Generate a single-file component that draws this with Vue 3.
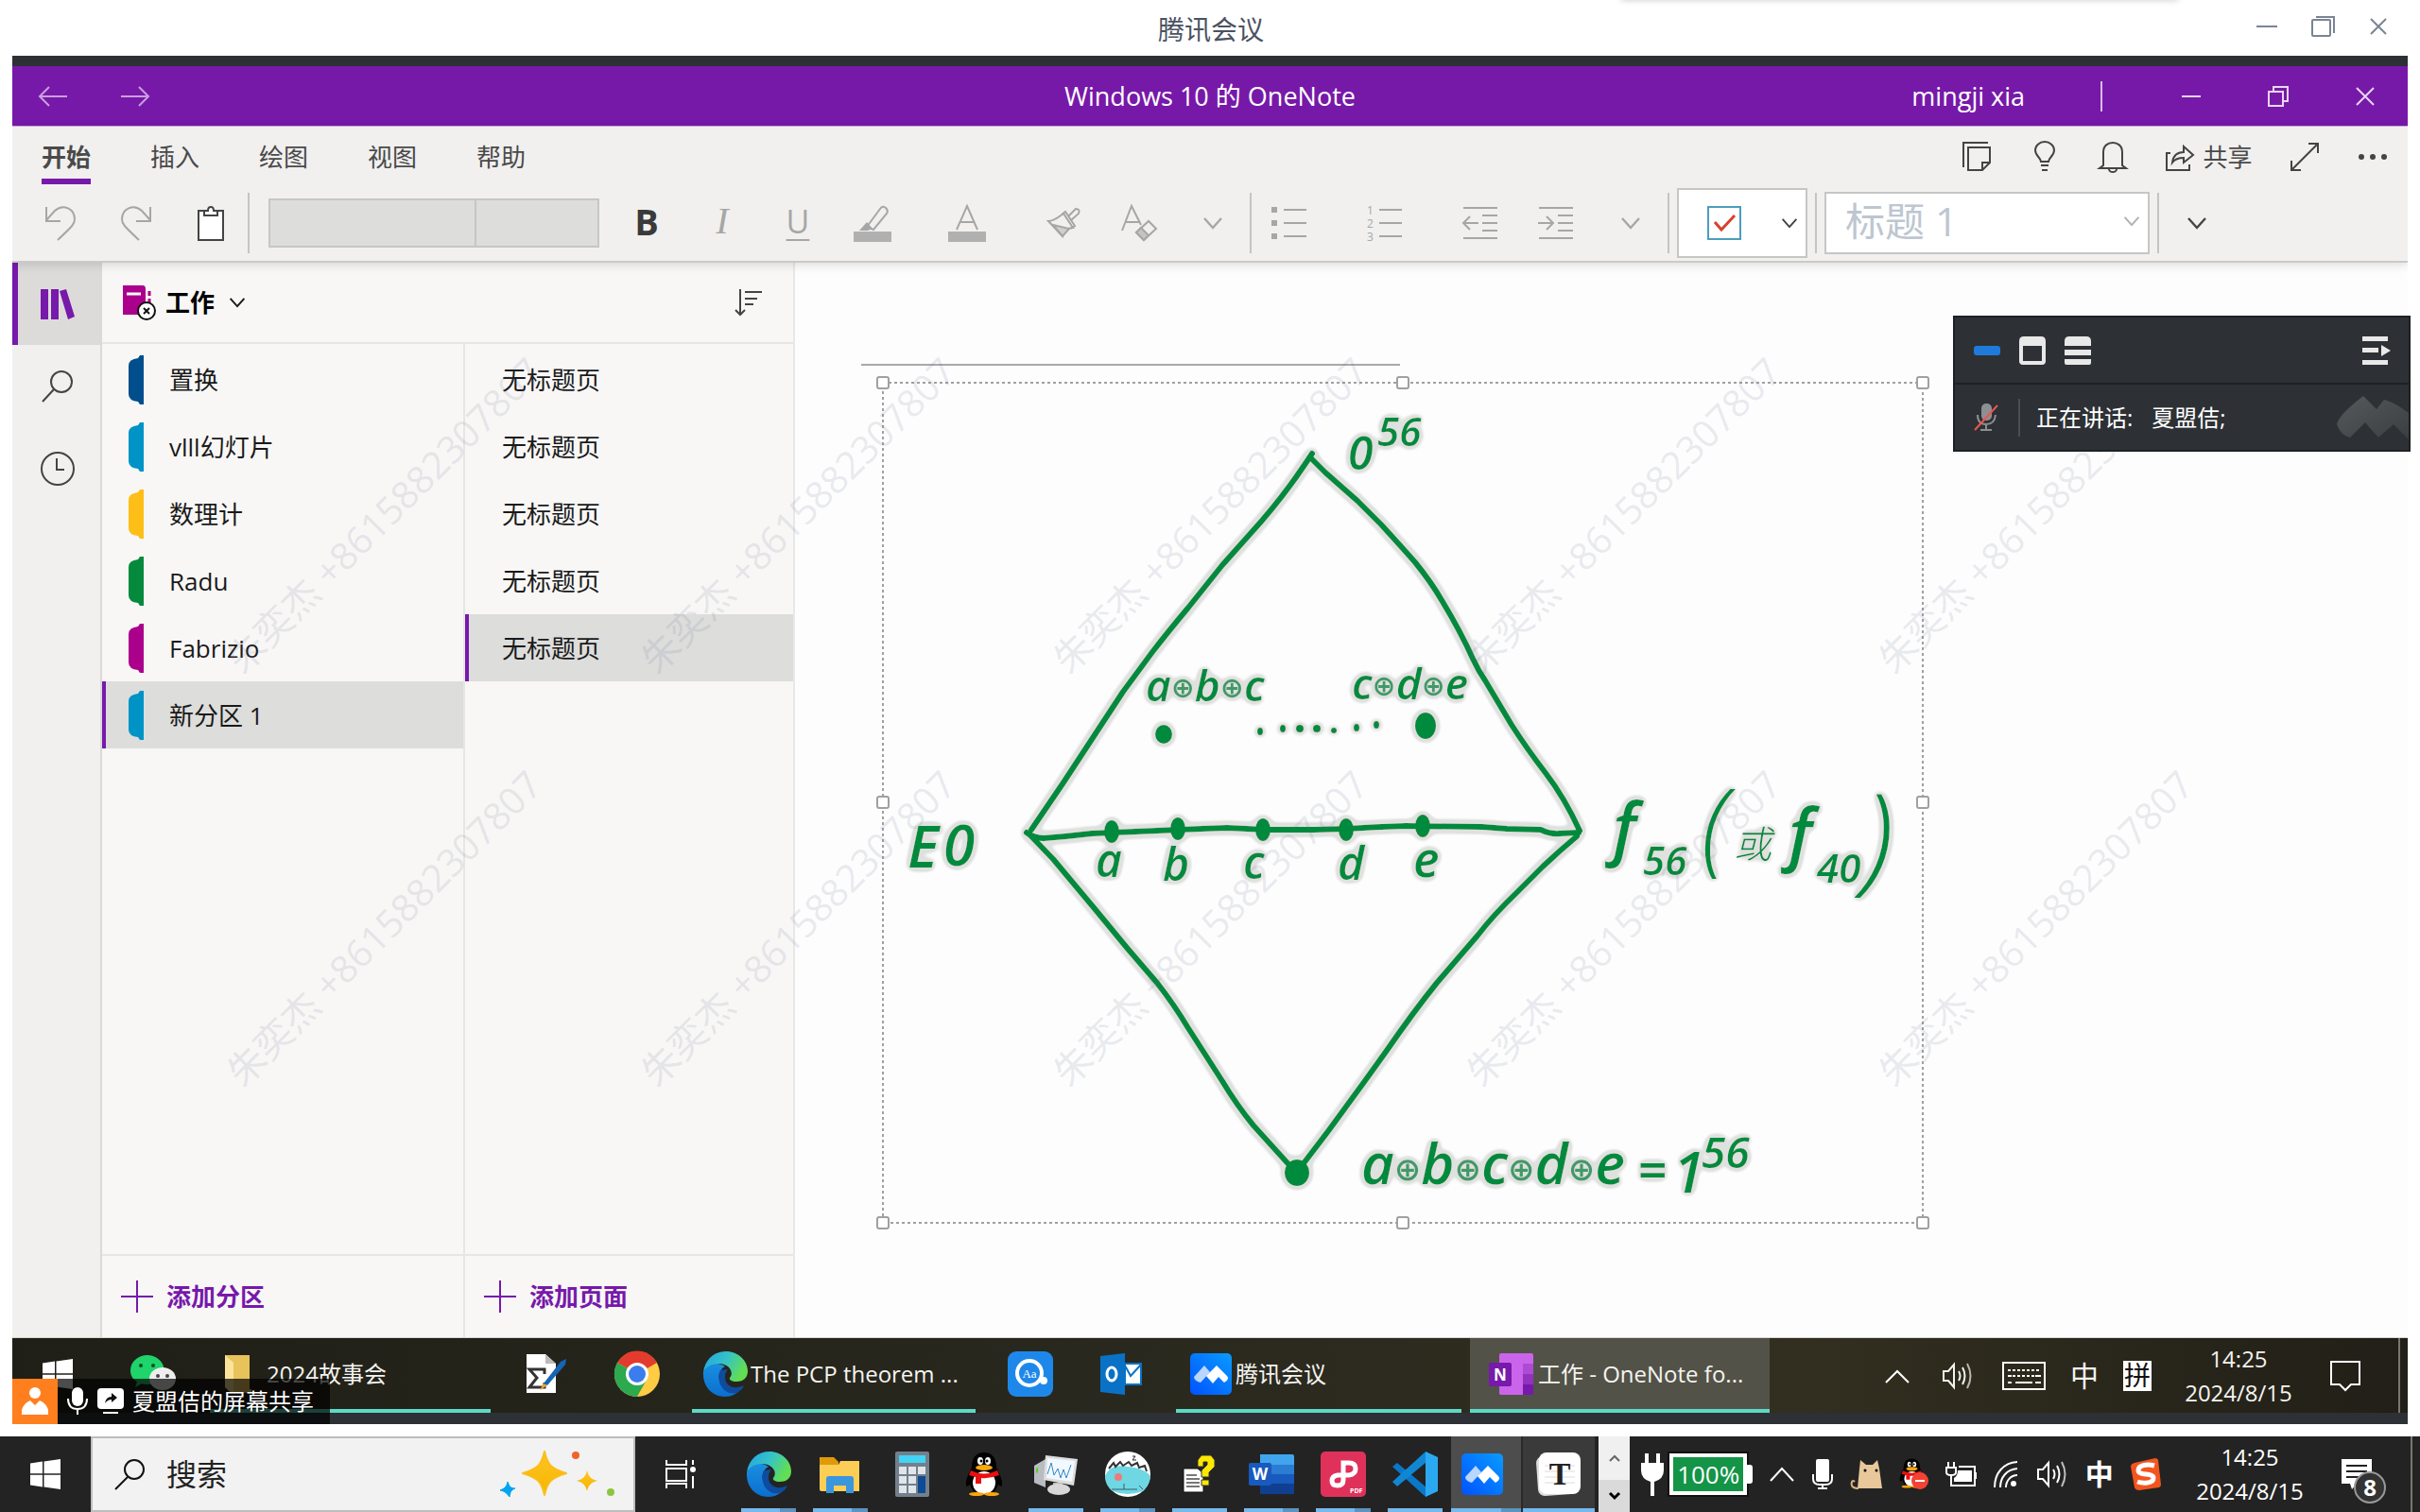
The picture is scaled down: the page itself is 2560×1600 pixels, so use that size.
<script setup>
const tabs = ['开始', '插入', '绘图', '视图', '帮助']
const sections = [
  { name: '置换', color: '#004e8c' },
  { name: 'vlll幻灯片', color: '#0093c6' },
  { name: '数理计', color: '#fdbf17' },
  { name: 'Radu', color: '#058a3d' },
  { name: 'Fabrizio', color: '#ab008b' },
  { name: '新分区 1', color: '#0093c6', active: true },
]
const pages = [1, 2, 3, 4, 5]

const strokes = [
  'M1388 480L1382 489Q1360 522 1334 552L1293 598L1257 643Q1236 668 1219 690L1188 732L1165 767L1125 828L1091 878',
  'M1386 484L1402 500L1436 530L1461 555Q1482 578 1497 595Q1514 616 1525 635Q1545 668 1558 697Q1564 710 1571 720L1599 767Q1615 792 1635 818Q1655 844 1671 879',
  'M1086 881Q1094 887 1104 887Q1130 885 1155 882L1247 878L1298 876L1339 878L1390 878L1425 877Q1455 875 1487 874L1568 875L1594 877L1630 878Q1640 883 1650 882L1670 881',
  'M1090 884L1114 909L1160 964L1193 1004L1224 1040Q1242 1063 1257 1088L1293 1144Q1308 1169 1326 1191L1364 1233',
  'M1668 885Q1650 900 1632 917L1604 945Q1580 968 1563 990L1520 1040Q1495 1071 1466 1113L1443 1145L1405 1197L1376 1235',
]
const dots = [
  [1176, 880, 8, 12], [1246, 877, 8, 12], [1336, 878, 8, 12], [1424, 878, 8, 12], [1505, 874, 8, 12],
  [1231, 777, 9, 10], [1508, 768, 11, 14], [1372, 1241, 13, 14],
  [1333, 774, 3, 4], [1357, 771, 3, 4], [1375, 771, 4, 4], [1393, 771, 4, 4], [1411, 773, 3, 3], [1435, 770, 3, 4], [1456, 767, 3, 4],
]
const labels = [
  ['0', 1426, 497, 48], ['56', 1457, 472, 42],
  ['a', 1159, 928, 48], ['b', 1230, 932, 48], ['c', 1315, 930, 48], ['d', 1415, 931, 48], ['e', 1495, 928, 52],
  ['E', 960, 918, 62], ['0', 998, 916, 60],
  ['f', 1706, 902, 72], ['56', 1738, 926, 42], ['f', 1892, 908, 72], ['40', 1922, 934, 42],
  ['=', 1732, 1258, 54], ['1', 1770, 1262, 60], ['56', 1800, 1236, 46],
]
const sums = [
  { x: 1212, y: 742, size: 46, parts: ['a', 'b', 'c'] },
  { x: 1430, y: 740, size: 46, parts: ['c', 'd', 'e'] },
  { x: 1440, y: 1253, size: 60, parts: ['a', 'b', 'c', 'd', 'e'] },
]
const handles = [[934, 405], [1484, 405], [2034, 405], [934, 849], [2034, 849], [934, 1294], [1484, 1294], [2034, 1294]]
const marks = [545, 982].flatMap((y) => [406, 844, 1280, 1717, 2153].map((x) => ({ x, y })))
</script>

<template>
  <div class="desktop">
    <svg class="defs" aria-hidden="true">
      <defs>
        <linearGradient id="eg1" x1="0" y1="0" x2="1" y2="0.4"><stop offset="0" stop-color="#1fa2e6" /><stop offset=".55" stop-color="#36c4c6" /><stop offset="1" stop-color="#62de52" /></linearGradient>
        <linearGradient id="eg2" x1="0" y1="0" x2="0" y2="1"><stop offset="0" stop-color="#1a8fe0" /><stop offset="1" stop-color="#0b6fd0" /></linearGradient>
        <linearGradient id="tm" x1="0" y1="1" x2="1" y2="0"><stop offset="0" stop-color="#0052ff" /><stop offset="1" stop-color="#0a9bff" /></linearGradient>
        <linearGradient id="sp" x1="0" y1="0" x2="0" y2="1"><stop offset="0" stop-color="#ffc524" /><stop offset="1" stop-color="#f5b400" /></linearGradient>
        <linearGradient id="mt" x1="0" y1="0" x2="1" y2="1"><stop offset="0" stop-color="#565a5d" /><stop offset="1" stop-color="#3a3e41" /></linearGradient>
        <symbol id="chev" viewBox="0 0 22 14"><path d="M2 2L11 12L20 2" fill="none" stroke="currentColor" stroke-width="2.4" /></symbol>
        <symbol id="win" viewBox="0 0 32 32"><path fill="#fff" d="M0 4.500L13 2.600V15.300H0zM14.500 2.400L32 0V15.300H14.500zM0 16.700H13V29.400L0 27.500zM14.500 16.700H32V32L14.500 29.600z" /></symbol>
        <symbol id="edge" viewBox="0 0 48 48">
          <path fill="url(#eg2)" d="M1 22C4 12 16 10 24 16C18 19 16 26 19 33C23 41 33 43 43 37C38 45 30 48 24 48C10 48 0 37 1 22z" />
          <path fill="#0d4c9e" d="M19 20C14 30 21 47 36 44C40 42 43 39 44 36C34 41 24 37 24 27C24 23 26 20 27 19z" />
          <path fill="url(#eg1)" d="M1 22C3 8 13 0 25 0C38 0 48 10 48 21C48 29 42 32 36 32C31 32 28 30 29 28C34 22 28 13 17 13C9 13 3 17 1 22z" />
        </symbol>
        <symbol id="tencent" viewBox="0 0 44 44">
          <rect width="44" height="44" rx="5" fill="url(#tm)" />
          <path fill="#b9d6ff" d="M4 25L15 13L21 20L11 31Q4 29 4 25z" />
          <path fill="#fff" d="M11 31L17 24L19 22L28 13L38 23Q43 27 36 31L30 25L24 32L17 24L11 31L11 31z" />
        </symbol>
        <symbol id="qq" viewBox="0 0 40 46">
          <path fill="#000" d="M7 16C7 5 12 0 20 0S33 5 33 16C36 22 40 29 39 35C37 37 35 34 35 33C33 42 28 44 20 44S7 42 5 33C5 34 3 37 1 35C0 29 4 22 7 16z" />
          <ellipse cx="20" cy="32" rx="12" ry="12" fill="#fff" /><ellipse cx="12" cy="44" rx="8" ry="2" fill="#fba60a" /><ellipse cx="28" cy="44" rx="8" ry="2" fill="#fba60a" />
          <path fill="#e81010" d="M6 19Q20 26 34 19L36 24Q26 28 17 27V33H11V26L4 24z" />
          <ellipse cx="16" cy="9" rx="3" ry="4" fill="#fff" /><ellipse cx="24" cy="9" rx="3" ry="4" fill="#fff" /><circle cx="17" cy="9" r="1.500" /><circle cx="23" cy="9" r="1.500" />
          <ellipse cx="20" cy="16" rx="9" ry="3" fill="#fba60a" />
        </symbol>
        <symbol id="speaker" viewBox="0 0 34 34">
          <path d="M2 12H7L13 5V29L7 22H2z M18 12Q21 17 18 22 M22 8Q27 17 22 26" fill="none" stroke="currentColor" stroke-width="2" />
          <path d="M27 4Q34 17 27 30" fill="none" stroke="currentColor" stroke-width="2" opacity=".7" />
        </symbol>
      </defs>
    </svg>

    <main class="meeting">
      <header class="meeting-bar">
        <span></span>
        <h1>腾讯会议</h1>
        <div class="win-btns">
          <button aria-label="最小化"><svg width="22" height="22"><path d="M0 11H22" stroke="#7b8494" stroke-width="2" /></svg></button>
          <button aria-label="还原"><svg width="26" height="24" fill="none" stroke="#7b8494" stroke-width="2"><rect x="1" y="5" width="19" height="17" rx="1" /><path d="M5 2H24V19" /></svg></button>
          <button aria-label="关闭"><svg width="18" height="18"><path d="M1 1L17 17M17 1L1 17" stroke="#7b8494" stroke-width="2" /></svg></button>
        </div>
        <i class="edge-shadow"></i>
      </header>

      <section class="stage">
        <div class="screen">
          <header class="app-bar">
            <div class="nav-btns">
              <button aria-label="后退"><svg width="30" height="22"><path d="M30 11H1M11 1L1 11L11 21" /></svg></button>
              <button aria-label="前进"><svg width="30" height="22"><path d="M0 11H29M19 1L29 11L19 21" /></svg></button>
            </div>
            <h2>Windows 10 的 OneNote</h2>
            <div class="app-right">
              <span>mingji xia</span>
              <i></i>
              <button aria-label="最小化"><svg width="20" height="20"><path d="M0 10H20" /></svg></button>
              <button aria-label="还原"><svg width="22" height="22"><path d="M1 6H16V21H1zM6 6V1H21V16H16" /></svg></button>
              <button aria-label="关闭"><svg width="20" height="20"><path d="M1 1L19 19M19 1L1 19" /></svg></button>
            </div>
          </header>

          <div class="ribbon">
            <div class="tab-row">
              <nav class="tabs">
                <button v-for="(t, i) in tabs" :key="t" :class="{ on: i === 0 }">{{ t }}</button>
              </nav>
              <div class="quick">
                <button aria-label="便笺"><svg width="32" height="34"><path d="M2 28V2H28M7 7H30V23L22 31H7zM22 31V23H30" /></svg></button>
                <button aria-label="提示"><svg width="24" height="34"><path d="M8 22C8 18 2 16 2 10A10 9 0 0 1 22 10C22 16 16 18 16 22zM8 26H16M9 31H15" /></svg></button>
                <button aria-label="通知"><svg width="30" height="34"><path d="M5 26V12C5 5 10 2 15 2S25 5 25 12V26L29 29H1zM11 30A4 3 0 0 0 19 30" /></svg></button>
                <button class="share"><svg width="32" height="32"><path d="M6 12H2V30H26V24M8 22C9 14 13 11 20 11V5L30 14L20 22V17C14 17 11 18 8 22z" /></svg>共享</button>
                <button aria-label="全屏"><svg width="30" height="30"><path d="M1 29L29 1M19 1H29V11M1 19V29H11" /></svg></button>
                <button aria-label="更多"><svg width="32" height="8"><g fill="#444" stroke="none"><circle cx="4" cy="4" r="3" /><circle cx="16" cy="4" r="3" /><circle cx="28" cy="4" r="3" /></g></svg></button>
              </div>
            </div>
            <div class="tool-row">
              <button aria-label="撤消"><svg width="34" height="38"><path d="M2 2V17H17M2 16L11 6C20 -2 32 4 32 15C32 20 30 22 14 37" /></svg></button>
              <button aria-label="恢复"><svg width="34" height="38"><path d="M32 2V17H17M32 16L23 6C14 -2 2 4 2 15C2 20 4 22 20 37" /></svg></button>
              <button class="n dark" aria-label="粘贴"><svg width="30" height="38"><path d="M2 6H28V37H2z" fill="#fff" /><path d="M8 11H22V6H18Q18 2 15 2T12 6H8z" fill="#fff" /></svg></button>
              <i class="sep"></i>
              <div class="combo"><select aria-label="字体"></select><select aria-label="字号"></select></div>
              <button class="b" aria-label="加粗">B</button>
              <button class="it" aria-label="倾斜">I</button>
              <button class="u" aria-label="下划线">U</button>
              <button class="n" aria-label="突出显示"><svg width="40" height="40"><path d="M14 24L28 5Q31 1 34 4T35 10L21 27z" /><path d="M6 28L14 19L20 26L15 28z" fill="#a6a6a6" stroke="none" /><path d="M0 29H40V40H0z" fill="#b0b0b0" stroke="none" /></svg></button>
              <button class="w" aria-label="字体颜色"><svg width="40" height="40"><path d="M9 27L20 2L31 27M13 19H27" /><path d="M0 29H40V40H0z" fill="#b0b0b0" stroke="none" /></svg></button>
              <button class="m" aria-label="格式刷"><svg width="36" height="36"><path d="M2 16C8 16 12 12 18 8L28 23Q20 23 17 32Z M16 9L20 6L30 21L26 24M23 11L31 3Q36 3 34 8L26 15" /><path d="M7 20L24 24L17 32z" fill="#cfcfcf" /></svg></button>
              <button class="n" aria-label="清除格式"><svg width="38" height="40"><path d="M1 28L11 2L21 22M5 19H19M16 30L29 18L37 26L24 38z" /><path d="M16 30L21 25L29 33L24 38z" fill="#c4c4c4" /></svg></button>
              <button class="n" aria-label="更多格式"><svg width="22" height="14"><use href="#chev" /></svg></button>
              <i class="sep"></i>
              <button aria-label="项目符号"><svg width="38" height="36"><g fill="#a6a6a6" stroke="none"><rect y="1" width="6" height="6" /><rect y="15" width="6" height="6" /><rect y="29" width="6" height="6" /></g><path d="M13 4H37M13 18H37M13 32H37" /></svg></button>
              <button class="w" aria-label="编号"><svg width="38" height="38"><g fill="#a6a6a6" stroke="none" font-size="12"><text x="0" y="10">1</text><text x="0" y="24">2</text><text x="0" y="38">3</text></g><path d="M13 5H37M13 19H37M13 33H37" /></svg></button>
              <button aria-label="减少缩进"><svg width="38" height="36"><path d="M1 2H37M21 10H37M21 18H37M21 26H37M1 34H37M17 18H2M8 11L1 18L8 25" /></svg></button>
              <button aria-label="增加缩进"><svg width="38" height="36"><path d="M1 2H37M21 10H37M21 18H37M21 26H37M1 34H37M0 18H15M9 11L16 18L9 25" /></svg></button>
              <button class="n" aria-label="更多段落"><svg width="22" height="14"><use href="#chev" /></svg></button>
              <i class="sep"></i>
              <button class="todo" aria-label="待办事项标记"><svg width="36" height="36"><path d="M1 1H35V35H1z" stroke="#4d9dbb" fill="#fff" /><path d="M8 17L15 25L29 10" stroke="#d8412f" stroke-width="3" /></svg><svg width="18" height="12" viewBox="0 0 22 14"><use href="#chev" /></svg></button>
              <i class="sep"></i>
              <button class="style">标题 1<svg width="18" height="12" viewBox="0 0 22 14"><use href="#chev" /></svg></button>
              <i class="sep"></i>
              <button class="dark" aria-label="展开"><svg width="22" height="14"><use href="#chev" /></svg></button>
            </div>
          </div>

          <div class="body">
            <nav class="rail">
              <button class="on" aria-label="笔记本"><svg width="38" height="34" fill="#7719aa"><path d="M1 1H9V33H1zM12 1H20V33H12zM21 3L28 1L37 30L30 33z" /></svg></button>
              <button aria-label="搜索"><svg width="36" height="36" class="line"><circle cx="22" cy="13" r="11" /><path d="M14 21L2 34" /></svg></button>
              <button aria-label="最近"><svg width="38" height="38" class="line"><circle cx="19" cy="19" r="17" /><path d="M18 8V20H26" /></svg></button>
            </nav>
            <aside class="panel">
              <header class="book">
                <svg width="36" height="38"><path d="M1 1H22Q25 1 25 5V32H1z" fill="#ab008b" /><path d="M5 10H20" stroke="#fff" stroke-width="3" /><path d="M29 7V12M29 15V20" stroke="#ab008b" stroke-width="3" /><circle cx="26" cy="28" r="9" fill="#fff" stroke="#111" stroke-width="2" /><path d="M23 25L29 31M29 25L23 31" stroke="#111" stroke-width="2" /></svg>
                <strong>工作</strong>
                <svg width="18" height="12"><use href="#chev" /></svg>
                <button aria-label="排序"><svg width="30" height="30" class="line"><path d="M6 1V28M1 23L6 28L11 23M11 4H29M11 11H24M11 17H20" /></svg></button>
              </header>
              <div class="cols">
                <ul class="sections">
                  <li v-for="s in sections" :key="s.name" :class="{ on: s.active }">
                    <svg width="16" height="52"><path d="M12 0H16V52H12L10 49Q0 48 0 41V11Q0 4 10 3z" :fill="s.color" /></svg>{{ s.name }}
                  </li>
                </ul>
                <ul class="pages">
                  <li v-for="p in pages" :key="p" :class="{ on: p === 5 }">无标题页</li>
                </ul>
              </div>
              <footer class="adds">
                <button><svg width="34" height="34"><path d="M0 17H34M17 0V34" stroke="#7719aa" stroke-width="2" /></svg>添加分区</button>
                <button><svg width="34" height="34"><path d="M0 17H34M17 0V34" stroke="#7719aa" stroke-width="2" /></svg>添加页面</button>
              </footer>
            </aside>

            <div class="canvas">
              <svg class="ink" width="1706" height="1137" viewBox="841 278 1706 1137">
                <defs>
                  <filter id="halo" x="-5%" y="-5%" width="110%" height="110%">
                    <feGaussianBlur in="SourceAlpha" stdDeviation="4" result="b" />
                    <feComponentTransfer in="b" result="t"><feFuncA type="linear" slope="8" intercept="-0.500" /></feComponentTransfer>
                    <feFlood flood-color="#dfe1df" /><feComposite in2="t" operator="in" result="h" />
                    <feMerge><feMergeNode in="h" /><feMergeNode in="SourceGraphic" /></feMerge>
                  </filter>
                </defs>
                <path d="M911 386H1481" stroke="#a9a9a9" stroke-width="2" />
                <rect x="934" y="405" width="1100" height="889" fill="none" stroke="#a0a0a0" stroke-width="2" stroke-dasharray="3 3" />
                <rect v-for="(h, i) in handles" :key="i" :x="h[0] - 6" :y="h[1] - 6" width="12" height="12" rx="2" fill="#fff" stroke="#a0a0a0" stroke-width="2" />
                <g filter="url(#halo)">
                  <path v-for="s in strokes" :key="s" :d="s" fill="none" stroke="#048a3c" stroke-width="6" stroke-linecap="round" stroke-linejoin="round" />
                  <ellipse v-for="(d, i) in dots" :key="i" :cx="d[0]" :cy="d[1]" :rx="d[2]" :ry="d[3]" fill="#048a3c" />
                  <text v-for="(l, i) in labels" :key="'l' + i" class="hand" :x="l[1]" :y="l[2]" :font-size="l[3]">{{ l[0] }}</text>
                  <text class="hand thin" x="1834" y="908" font-size="40">或</text>
                  <text class="hand thin" x="1800" y="913" font-size="108">(</text>
                  <text class="hand thin" x="1970" y="930" font-size="126">)</text>
                  <text v-for="s in sums" :key="s.x" class="hand" :x="s.x" :y="s.y" :font-size="s.size"><template v-for="(p, i) in s.parts" :key="i"><tspan v-if="i" class="plus" :dy="-4" :font-size="s.size > 50 ? 34 : 30">⊕</tspan><tspan :dy="i ? 4 : 0">{{ p }}</tspan></template></text>
                </g>
              </svg>
            </div>
          </div>

          <footer class="bar inner">
            <button class="i-start" aria-label="开始"><svg width="32" height="32"><use href="#win" /></svg></button>
            <button class="i-wechat" aria-label="微信"><svg width="48" height="40"><path d="M18 0C8 0 0 7 0 16C0 22 3 26 7 28L5 34L12 30C16 32 26 31 30 28C36 24 36 18 35 12C33 5 26 0 18 0z" fill="#1ed46b" /><circle cx="11" cy="11" r="2" fill="#0b4f28" /><circle cx="24" cy="11" r="2" fill="#0b4f28" /><ellipse cx="34" cy="25" rx="14" ry="12" fill="#eee" /><circle cx="29" cy="22" r="2" fill="#444" /><circle cx="39" cy="22" r="2" fill="#444" /></svg></button>
            <button class="i-folder open"><svg width="28" height="40"><path d="M0 0H26V36H28V40H6L0 34z" fill="#e8c25a" /><path d="M0 0L9 8V40L0 34z" fill="#fbe49a" /></svg><span>2024故事会</span></button>
            <button class="i-sum" aria-label="公式编辑器"><svg width="46" height="44"><path d="M2 1H22L33 11V42H2z" fill="#fff" /><path d="M22 1V11H33" fill="#bbb" /><path d="M21 22V17H5L13 26L5 36H21V31" fill="none" stroke="#333" stroke-width="3" /><path d="M20 32L38 9L44 6L43 12L24 34z" fill="#1565b5" /><path d="M20 32L24 34L16 39z" fill="#f1a12c" /></svg></button>
            <button class="i-chrome" aria-label="Chrome"><svg width="48" height="48"><circle cx="24" cy="24" r="24" fill="#fc4" /><path d="M24 24L3 12A24 24 0 0 1 45 12z" fill="#e33b2e" /><path d="M24 24L3 12A24 24 0 0 0 24 48L34 30z" fill="#2da94f" /><circle cx="24" cy="24" r="12" fill="#fff" /><circle cx="24" cy="24" r="9" fill="#3b7ded" /></svg></button>
            <button class="i-edge open"><svg width="48" height="48"><use href="#edge" /></svg><span>The PCP theorem ...</span></button>
            <button class="i-aa" aria-label="词典"><svg width="48" height="48"><rect width="48" height="48" rx="9" fill="#1e88ea" /><circle cx="23" cy="23" r="13" fill="none" stroke="#fff" stroke-width="4" /><circle cx="38" cy="31" r="4" fill="#fff" /><text x="23" y="28" fill="#fff" font-size="13" text-anchor="middle" class="serif">Aa</text></svg></button>
            <button class="i-outlook" aria-label="Outlook"><svg width="44" height="44"><path d="M0 3L26 0V44L0 41z" fill="#0a72c6" /><path d="M26 11H43V33H26z" fill="#fff" stroke="#0a72c6" stroke-width="2" /><path d="M26 13L32 24L43 12" fill="none" stroke="#0a72c6" stroke-width="2" /><ellipse cx="12" cy="22" rx="5" ry="7" fill="none" stroke="#fff" stroke-width="3" /></svg></button>
            <button class="i-meet open"><svg width="44" height="44"><use href="#tencent" /></svg><span>腾讯会议</span></button>
            <button class="i-note open on"><svg width="48" height="44"><rect x="11" width="36" height="44" rx="2" fill="#ca64ea" /><path d="M36 11H47V22H36z" fill="#ae4bd5" /><path d="M36 22H47V33H36z" fill="#9332bf" /><path d="M36 33H47V44H36z" fill="#7719aa" /><rect y="10" width="24" height="25" rx="2" fill="#7719aa" /><text x="12" y="29" fill="#fff" font-size="17" font-weight="700" text-anchor="middle">N</text></svg><span>工作 - OneNote fo...</span></button>
            <div class="tray">
              <svg class="caret" width="26" height="16"><path d="M1 15L13 3L25 15" class="w-line" /></svg>
              <svg class="vol" width="34" height="34"><use href="#speaker" /></svg>
              <svg width="46" height="30"><path d="M1 1H45V29H1z" class="w-line" /><path d="M6 9H41M11 15H34" class="w-line" stroke-dasharray="3 2" /><path d="M6 15H10M35 15H41M6 22H10M14 22H32M35 22H41" class="w-line" /></svg>
              <span class="zh">中</span>
              <span class="pin">拼</span>
            </div>
            <div class="clock"><time>14:25</time><time>2024/8/15</time></div>
            <svg class="note-i" width="34" height="34"><path d="M2 2H32V26H23L17 32L11 26H2z" class="w-line" /></svg>
            <i class="peek"></i>
          </footer>

          <div class="marks" aria-hidden="true">
            <span v-for="(m, i) in marks" :key="i" :style="{ left: m.x - 13 + 'px', top: m.y - 70 + 'px' }">朱奕杰 +8615882307807</span>
          </div>
        </div>

        <div class="float">
          <div class="float-top">
            <svg width="28" height="10"><rect width="28" height="10" rx="3" fill="#1f7bdb" /></svg>
            <svg width="28" height="30"><path fill-rule="evenodd" d="M5 0H23Q28 0 28 5V26Q28 30 24 30H4Q0 30 0 26V5Q0 0 5 0zM4 10V26H24V10z" fill="#e8e8e8" /></svg>
            <svg width="28" height="30"><path d="M5 0H23Q28 0 28 5V10H0V5Q0 0 5 0zM0 14H28V20H0zM0 24H28V28Q28 30 26 30H2Q0 30 0 28z" fill="#e8e8e8" /></svg>
            <svg class="push" width="30" height="30"><path d="M0 0H27V5H0zM0 12H17V17H0zM0 25H27V30H0zM20 9L30 15L20 21z" fill="#e8e8e8" /></svg>
          </div>
          <div class="float-bottom">
            <svg width="26" height="30"><rect x="8" y="0" width="11" height="18" rx="5" fill="#8d9092" /><path d="M4 12Q4 22 13 22T23 12M13 22V28M7 28H19" fill="none" stroke="#8d9092" stroke-width="2" /><path d="M1 28L25 2" stroke="#ef5350" stroke-width="2" /></svg>
            <i></i>
            <span>正在讲话:</span><span>夏盟佶;</span>
            <svg class="push" width="76" height="46"><path d="M0 30Q2 20 28 0L42 14L50 4Q60 6 76 18V46L60 30L44 44L30 28L14 44Q4 42 0 30z" fill="url(#mt)" /></svg>
          </div>
        </div>

        <div class="tag">
          <b><svg width="28" height="30"><circle cx="14" cy="6" r="6" fill="#fff" /><path d="M0 29V24Q2 17 9 14L14 19L19 14Q26 17 28 24V29z" fill="#fff" /></svg></b>
          <svg width="24" height="30"><rect x="6" width="12" height="20" rx="6" fill="#fff" /><path d="M2 12Q2 23 12 23T22 12M12 23V29" fill="none" stroke="#fff" stroke-width="2" /></svg>
          <svg width="28" height="28"><rect width="28" height="22" rx="4" fill="#fff" /><path d="M8 16Q9 9 15 9V5L21 10L15 15V12Q11 12 8 16z" fill="#111" /><path d="M6 26H22" stroke="#fff" stroke-width="2" /></svg>
          <span>夏盟佶的屏幕共享</span>
        </div>
      </section>
    </main>

    <footer class="bar outer">
      <button class="o-start" aria-label="开始"><svg width="32" height="32"><use href="#win" /></svg></button>
      <div class="search">
        <svg width="34" height="34" fill="none" stroke="#111" stroke-width="2"><circle cx="22" cy="12" r="10" /><path d="M15 20L2 33" /></svg>
        <input type="text" placeholder="搜索" aria-label="搜索" />
        <svg width="124" height="50"><path d="M48 1C51 15 55 19 71 24C55 29 51 33 48 47C45 33 41 29 25 24C41 19 45 15 48 1z" fill="url(#sp)" stroke="#fcbd1a" stroke-width="2" stroke-linejoin="round" /><path d="M93 21C95 28 97 30 104 32C97 34 95 36 93 43C91 36 89 34 82 32C89 30 91 28 93 21z" fill="url(#sp)" /><path d="M9 33C11 38 12 40 17 40C12 42 12 44 11 49C8 45 6 43 1 42C6 40 8 38 9 33z" fill="#00a4ef" stroke="#00a4ef" /><circle cx="81" cy="5" r="4" fill="#f1632a" /><circle cx="118" cy="44" r="4" fill="#8cc63f" /></svg>
      </div>
      <button class="o-view" aria-label="任务视图"><svg width="34" height="32" fill="none" stroke="#fff" stroke-width="2"><path d="M1 1V6H22V1M1 10H22V23H1zM1 31V26H22V31M29 1V6M29 18V31" /><circle cx="29" cy="11" r="2" fill="#fff" /></svg></button>
      <button class="app two" aria-label="Edge"><svg width="48" height="48"><use href="#edge" /></svg></button>
      <button class="app two" aria-label="资源管理器"><svg width="44" height="40"><path d="M0 2H15L20 7V12H0z" fill="#e09a07" /><path d="M2 6H42V38H2Q0 38 0 36V10H20L22 6z" fill="#fdce55" /><path d="M7 40V25Q7 22 10 22H33Q36 22 36 25V40H28V32H15V40z" fill="#3a96dd" /></svg></button>
      <button class="app" aria-label="计算器"><svg width="36" height="48"><rect width="36" height="48" rx="2" fill="#73808c" /><path d="M4 4H32V12H4z" fill="#43d3f5" /><g fill="#dfe5ea"><path d="M4 16H12V24H4zM14 16H22V24H14zM24 16H32V24H24zM4 26H12V34H4zM14 26H22V34H14zM4 36H12V44H4zM14 36H22V44H14z" /></g><path d="M24 26H32V44H24z" fill="#0e4b95" /></svg></button>
      <button class="app" aria-label="QQ"><svg width="40" height="46"><use href="#qq" /></svg></button>
      <button class="app open" aria-label="系统监视器"><svg width="46" height="44"><path d="M0 13L12 6V36L0 31z" fill="#b9bcc0" /><path d="M2 16L4 15V20L2 21z" fill="#4fd32c" /><path d="M12 2L46 6L42 34L10 28z" fill="#ddd" /><path d="M14 5L43 8L40 30L13 26z" fill="#f2f8ff" /><path d="M14 22L18 10L21 23L25 16L28 26L31 17L34 26L39 12" fill="none" stroke="#2d88c8" /><path d="M20 31H30V36H20z" fill="#bbb" /><ellipse cx="26" cy="38" rx="12" ry="6" fill="#d8d8d8" /></svg></button>
      <button class="app two" aria-label="鲸鱼"><svg width="48" height="48"><circle cx="24" cy="24" r="24" fill="#fff" /><path d="M0 26C4 15 16 14 24 16C36 17 45 21 48 26A24 24 0 0 1 40 42Q24 48 8 42Q0 36 0 26z" fill="#6fd6e4" /><path d="M4 18L9 12L11 16L16 11L19 15L25 11L28 15L34 12L36 17L42 15L44 21" fill="none" stroke="#333" stroke-width="2" /><circle cx="14" cy="27" r="4" fill="#ee7b7b" /><path d="M7 40H34M20 34V40M36 36L40 40" stroke="#34616b" /><path d="M29 5H32L29 9H33" fill="none" stroke="#222" /></svg></button>
      <button class="app open" aria-label="帮助"><svg width="36" height="42"><path d="M1 15H16L22 20V40H1z" fill="#fff" stroke="#111" /><path d="M4 22H15M4 26H18M4 30H18M4 34H18" stroke="#777" stroke-width="2" /><path d="M16 13V6L20 1H30L34 6V13L28 19V24H20V17L26 11V8H22V13zM20 27H28V33H20z" fill="#ffe800" stroke="#333" /></svg></button>
      <button class="app two" aria-label="Word"><svg width="48" height="42"><path d="M12 0H46Q48 0 48 2V11H12z" fill="#41a5ee" /><path d="M12 11H48V21H12z" fill="#2b7cd3" /><path d="M12 21H48V31H12z" fill="#185abd" /><path d="M12 31H48V42H12z" fill="#103f91" /><rect y="9" width="24" height="24" rx="2" fill="#185abd" /><text x="12" y="27" fill="#fff" font-size="17" font-weight="700" text-anchor="middle">W</text></svg></button>
      <button class="app two" aria-label="PDF"><svg width="48" height="48"><rect width="48" height="48" rx="5" fill="#e0315b" /><path d="M24 26V12H30Q37 12 37 18T30 25H18Q12 26 12 31T18 36Q24 36 24 30V24" fill="none" stroke="#fff" stroke-width="5" /><text x="31" y="44" fill="#fff" font-size="7" font-weight="700">PDF</text></svg></button>
      <button class="app open" aria-label="VS Code"><svg width="48" height="48"><path d="M0 16L5 12L36 38V48L34 47z" fill="#0a78c8" /><path d="M0 32L5 37L36 11V0L34 1z" fill="#1187d4" /><path d="M35 0L48 6V42L35 48z" fill="#2aa9f2" /></svg></button>
      <button class="app two on meet" aria-label="腾讯会议"><svg width="44" height="44"><use href="#tencent" /></svg></button>
      <button class="app open lit" aria-label="Typora"><svg width="46" height="46"><rect y="3" width="42" height="42" rx="7" fill="#ddd" transform="rotate(-4 21 24)" /><rect x="2" width="44" height="44" rx="8" fill="#fff" /><path d="M8 14H40M8 20H40M8 26H40M8 32H40" stroke="#ddd" /><text x="24" y="34" font-size="34" font-weight="700" text-anchor="middle" fill="#222" class="serif">T</text></svg></button>
      <div class="scroll"><button aria-label="上"><svg width="12" height="10"><path d="M1 8L6 3L11 8" fill="none" stroke="#666" stroke-width="2" /></svg></button><button aria-label="下"><svg width="12" height="10"><path d="M1 2L6 7L11 2" fill="none" stroke="#000" stroke-width="3" /></svg></button></div>
      <div class="sys">
        <svg width="24" height="46"><path d="M4 1H8V11H16V1H20V11H24V19Q24 28 14 31V46H10V31Q0 28 0 19V11H4z" fill="#fff" /></svg>
        <div class="battery">100%</div>
        <svg width="26" height="16"><path d="M1 15L13 2L25 15" class="w-line" /></svg>
        <svg width="22" height="32"><rect x="4" width="14" height="24" rx="2" fill="#fff" /><path d="M1 16V21Q1 27 8 27H14Q21 27 21 21V16M11 27V31M6 31H16" class="w-line" /></svg>
        <svg width="34" height="32"><path d="M10 10L11 1L17 6H24L29 1L31 10L34 31H8z" fill="#e8c79a" /><path d="M9 31Q0 31 2 24Q3 22 5 24" fill="none" stroke="#d9b07b" stroke-width="2" /><circle cx="16" cy="12" r="1.500" /><circle cx="28" cy="12" r="1.500" /></svg>
        <svg width="32" height="34"><use href="#qq" width="27" height="32" /><circle cx="22" cy="24" r="9" fill="#f44336" /><path d="M17 24H27" stroke="#fff" stroke-width="2" /></svg>
        <svg width="32" height="26"><path d="M2 0V5M8 0V5M0 6H10V11Q10 14 5 14T0 11zM5 14V25H30V5H13M31 11V18" class="w-line" /><path d="M12 9H27V21H8V17Q12 15 12 9z" fill="#fff" /></svg>
        <svg width="26" height="30"><path d="M1 29C1 14 10 3 25 2M7 29C7 18 14 10 25 9M13 29C13 22 18 16 25 16" class="w-line" /><circle cx="21" cy="25" r="3" fill="#fff" /></svg>
        <svg width="34" height="34"><use href="#speaker" /></svg>
        <span class="zh bold">中</span>
        <svg width="32" height="34"><path d="M4 5L26 0Q28 0 29 2L32 28Q32 30 30 31L9 34Q5 34 4 31L0 9Q0 6 4 5z" fill="#f4551e" /><path d="M25 8C18 6 8 7 8 13C8 19 24 15 24 21C24 27 13 27 7 25" fill="none" stroke="#fff" stroke-width="5" /></svg>
      </div>
      <div class="clock"><time>14:25</time><time>2024/8/15</time></div>
      <div class="notes"><svg width="34" height="36"><path d="M1 1H33V27H17L12 33L10 27H1z" fill="#fff" /><path d="M6 8H28M6 14H28M6 20H20" stroke="#222" stroke-width="2" /></svg><b>8</b></div>
      <i class="peek"></i>
    </footer>
  </div>
</template>

<style>
body {
  margin: 0;
  background: #fff;
}
</style>

<style scoped>
.desktop {
  display: flex;
  flex-direction: column;
  min-height: 100vh;
  background: #fff;
  font-family: "Open Sans", "Noto Sans", "Noto Sans CJK SC", sans-serif;
  font-size: 26px;
  line-height: 36px;
  overflow: hidden;
}
.defs { position: absolute; width: 0; height: 0; }
svg { display: block; flex: none; overflow: visible; }
h1, h2, ul { margin: 0; padding: 0; list-style: none; font-weight: 400; }
button {
  display: flex;
  align-items: center;
  justify-content: center;
  flex: none;
  margin: 0;
  padding: 0;
  border: 0;
  background: none;
  color: inherit;
  font: inherit;
}
.meeting { display: flex; flex-direction: column; flex: 1; }

/* meeting window title */
.meeting-bar {
  position: relative;
  display: grid;
  grid-template-columns: 1fr auto 1fr;
  align-items: center;
  height: 59px;
}
.meeting-bar h1 { padding: 2px 0 0 2px; font-size: 28px; color: #4b5263; }
.win-btns { display: flex; justify-content: flex-end; gap: 36px; padding: 0 35px 3px 0; }
.edge-shadow {
  position: absolute;
  top: -4px;
  left: 67%;
  right: 10%;
  height: 4px;
  box-shadow: 0 0 6px rgba(0, 0, 0, 0.25);
}
.stage {
  position: relative;
  display: flex;
  flex: 1;
  margin: 0 13px 13px;
  padding: 11px 0 12px;
  background: #2d3135;
}
.screen { position: relative; display: flex; flex-direction: column; flex: 1; min-width: 0; background: #fdfdfd; overflow: hidden; }

/* app title bar */
.app-bar {
  display: grid;
  grid-template-columns: 1fr auto 1fr;
  align-items: center;
  height: 63px;
  background: #7719a8;
  border-bottom: 1px solid #cfa8e2;
  color: #fff;
  font-size: 27px;
}
.app-bar svg { fill: none; stroke: #e9d6f3; stroke-width: 2; }
.nav-btns { display: flex; gap: 57px; padding-left: 28px; }
.nav-btns svg { stroke: #c99fe0; }
.app-bar h2 { font-size: 27px; }
.app-right { display: flex; align-items: center; justify-content: flex-end; padding-right: 35px; }
.app-right i { width: 2px; height: 32px; margin: 0 84px 0 80px; background: #d9bce8; }
.app-right button + button { margin-left: 71px; }

/* ribbon */
.ribbon {
  position: relative;
  z-index: 1;
  background: #f1f0ef;
  border-bottom: 2px solid #cbcac9;
  box-shadow: 0 2px 10px rgba(0, 0, 0, 0.14);
  color: #4a4a4a;
}
.tab-row { display: flex; justify-content: space-between; height: 65px; }
.tabs { display: flex; gap: 63px; padding-left: 31px; }
.tabs button { height: 61px; padding-top: 8px; border-bottom: 6px solid transparent; box-sizing: border-box; }
.tabs .on { border-color: #7719aa; font-weight: 700; }
.quick { display: flex; padding: 0 1px 2px 0; }
.quick button { width: 72px; }
.quick .share { width: 131px; gap: 8px; }
.quick svg { fill: none; stroke: #444; stroke-width: 2; }
.tool-row { display: flex; align-items: center; height: 74px; padding: 0 0 3px 11px; color: #a6a6a6; }
.tool-row svg { fill: none; stroke: currentColor; stroke-width: 2; }
.tool-row > button { width: 80px; height: 74px; }
.tool-row > .n { width: 78px; }
.tool-row > .m { width: 82px; }
.tool-row > .w { width: 122px; }
.tool-row .dark { color: #444; }
.sep { flex: none; width: 2px; height: 64px; background: #c4c4c3; }
.combo { display: flex; flex: none; width: 350px; height: 52px; margin: 0 10px 0 20px; box-sizing: border-box; border: 2px solid #c6c6c5; background: #dddddc; }
.combo select { flex: 1; appearance: none; margin: 0; border: 0; background: none; }
.combo select + select { flex: none; width: 130px; border-left: 2px solid #c6c6c5; }
.tool-row .b { padding-bottom: 4px; box-sizing: border-box; font-size: 38px; font-weight: 700; color: #3a3a3a; }
.tool-row .it { padding-bottom: 4px; box-sizing: border-box; font-family: "Liberation Serif", serif; font-size: 40px; font-style: italic; }
.tool-row .u { padding-bottom: 4px; box-sizing: border-box; font-size: 34px; text-decoration: underline; text-decoration-thickness: 2px; text-underline-offset: 6px; }
.tool-row > .todo { width: 138px; margin: 0 8px; padding-right: 8px; box-sizing: border-box; justify-content: flex-end; gap: 42px; border: 2px solid #c6c6c5; background: #fff; color: #444; }
.tool-row > .style { width: 344px; height: 66px; margin: 0 8px; padding: 0 8px 4px 20px; box-sizing: border-box; justify-content: space-between; border: 2px solid #c6c6c5; background: #fff; font-size: 42px; color: #bdc6d1; }
.style svg { color: #b0b0b0; }

/* notebook */
.body { display: flex; flex: 1; min-height: 0; }
.rail { display: flex; flex-direction: column; width: 93px; background: #f1f0ef; border-right: 2px solid #d9d9d8; }
.rail button { height: 87px; border-left: 6px solid transparent; padding-right: 4px; }
.rail .on { background: #dcdbda; border-color: #7719aa; }
.line { fill: none; stroke: #444; stroke-width: 2; }
.panel { display: flex; flex-direction: column; flex: none; width: 731px; background: #f8f7f6; border-right: 2px solid #e8e8e7; color: #1a1a1a; }
.book { display: flex; align-items: center; height: 84px; padding: 0 32px 0 21px; border-bottom: 2px solid #e6e6e5; }
.book strong { margin: 0 15px 0 10px; color: #000; }
.book button { margin-left: auto; }
.cols { display: flex; flex: 1; }
.cols ul { padding-top: 2px; }
.sections { width: 382px; border-right: 2px solid #e6e6e5; }
.pages { flex: 1; }
.cols li { display: flex; align-items: center; height: 71px; box-sizing: border-box; border-left: 4px solid transparent; }
.sections li { padding-left: 24px; gap: 27px; }
.pages li { padding-left: 35px; }
.cols .on { background: #dddddc; border-color: #7719aa; }
.adds { display: flex; height: 86px; border-top: 2px solid #e6e6e5; color: #7719aa; font-weight: 700; }
.adds button { width: 384px; box-sizing: border-box; justify-content: flex-start; gap: 14px; padding-left: 20px; border-right: 2px solid #e6e6e5; }
.adds button + button { width: 347px; border: 0; }
.canvas { position: relative; flex: 1; min-width: 0; background: #fdfdfd; }
.ink { position: absolute; top: 0; left: 0; }
.hand { fill: #048a3c; font-style: italic; font-weight: 600; }
.thin { font-weight: 300; }
.plus { fill: #3f9a68; font-family: "DejaVu Sans", sans-serif; font-style: normal; font-weight: 700; }
.marks span {
  position: absolute;
  font-size: 40px;
  line-height: 40px;
  white-space: nowrap;
  color: rgba(96, 106, 136, 0.15);
  transform: translate(-50%, -50%) rotate(-45deg);
}

/* taskbars */
.bar { display: flex; height: 80px; flex: none; color: #fff; font-size: 24px; }
.w-line { fill: none; stroke: #fff; stroke-width: 2; }
.serif { font-family: "Liberation Serif", serif; }
.clock { display: flex; flex-direction: column; justify-content: center; align-items: center; width: 128px; flex: none; }
.peek { flex: none; width: 2px; background: #77776f; }
.inner { height: 79px; background: linear-gradient(90deg, #201f17, #29281e 45%, #322f20 75%, #211f17); color: #f4f4f0; border-top: 1px solid #d5d5d2; box-sizing: content-box; }
.inner button { box-sizing: border-box; justify-content: flex-start; border-bottom: 4px solid transparent; }
.inner .open { border-color: #5fd9c6; }
.inner .on { background: #535248; }
.i-start { width: 125px; padding-left: 32px; }
.i-wechat { width: 84px; }
.i-folder { width: 297px; padding-left: 16px; gap: 16px; }
.i-sum { width: 131px; padding-left: 36px; }
.i-chrome { width: 82px; }
.i-edge { width: 300px; padding-left: 11px; gap: 3px; }
.i-aa { width: 132px; padding-left: 34px; }
.i-outlook { width: 80px; }
.i-meet { width: 302px; padding-left: 15px; gap: 4px; }
.i-note { width: 317px; margin-left: 9px; padding-left: 20px; gap: 4px; }
.i-edge span, .i-note span { white-space: nowrap; }
.tray { display: flex; align-items: center; gap: 26px; margin-left: auto; padding-right: 28px; }
.caret { margin-right: 8px; }
.vol { margin-right: 4px; }
.zh { font-size: 30px; }
.bold { font-weight: 700; }
.pin { width: 30px; height: 32px; line-height: 30px; text-align: center; background: #fff; color: #111; font-size: 28px; }
.note-i { align-self: center; margin: 0 39px 0 32px; }
.inner .peek { margin-right: 8px; }

.float {
  position: absolute;
  top: 275px;
  right: -3px;
  width: 480px;
  border: 2px solid #1e2123;
  background: #2d3135;
  color: #fff;
  font-size: 24px;
}
.float > div { display: flex; align-items: center; height: 69px; padding-left: 20px; }
.float-top { gap: 20px; border-bottom: 2px solid #1e2123; }
.push { margin-left: auto; }
.float-top .push { margin-right: 19px; }
.float-bottom i { width: 2px; height: 40px; margin: 0 17px 0 21px; background: #4b4f52; }
.float-bottom span { margin-right: 20px; }
.tag {
  position: absolute;
  left: 0;
  bottom: 0;
  display: flex;
  align-items: center;
  height: 48px;
  width: 336px;
  gap: 9px;
  background: rgba(0, 0, 0, 0.7);
  color: #fff;
  font-size: 24px;
}
.tag b { display: flex; align-items: center; justify-content: center; width: 48px; height: 48px; background: #ff7f1e; }

.outer { background: #232323; }
.o-start { width: 96px; }
.search { display: flex; align-items: center; width: 576px; box-sizing: border-box; padding: 0 18px 0 22px; border: 2px solid #bdbdbd; background: #f2f2f2; }
.search input { flex: 1; min-width: 0; margin-left: 22px; padding: 0; border: 0; background: none; font: inherit; font-size: 32px; color: #222; }
.search input::placeholder { color: #222; opacity: 1; }
.o-view { width: 103px; padding-right: 6px; box-sizing: border-box; }
.app { position: relative; width: 76px; }
.app.open::after, .app.two::after { content: ""; position: absolute; left: 9px; right: 9px; bottom: 0; height: 4px; background: #76b9ed; }
.app.two::after { background: linear-gradient(90deg, #76b9ed 71%, #5d93be 71%); }
.app.on { background: #4d4d4d; border-right: 2px solid #2a2a2a; box-sizing: border-box; padding-right: 8px; }
.app.lit { background: #3a3a3a; }
.app.on::after, .app.lit::after { left: 0; right: 0; }
.scroll { display: flex; flex-direction: column; width: 33px; margin-left: 4px; background: #f0f0f0; }
.scroll button { height: 46px; }
.scroll button + button { height: 34px; background: #dadada; }
.sys { display: flex; align-items: center; flex: 1; justify-content: space-between; padding-left: 12px; }
.battery {
  position: relative;
  width: 82px;
  height: 44px;
  margin: 0 6px 0 -12px;
  box-sizing: border-box;
  border: 4px solid #fff;
  outline: 2px solid #111;
  background: #149447;
  line-height: 36px;
  text-align: center;
  font-size: 26px;
}
.battery::after { content: ""; position: absolute; left: 78px; top: 8px; width: 6px; height: 20px; background: #fff; border-radius: 0 3px 3px 0; }
.outer .clock { margin-left: 30px; }
.notes { position: relative; width: 50px; margin: 23px 24px 0 32px; }
.notes b { position: absolute; left: 14px; top: 14px; width: 34px; height: 34px; box-sizing: border-box; border: 2px solid #999; border-radius: 50%; background: #333; text-align: center; line-height: 30px; font-size: 24px; }
.outer .peek { margin-right: 8px; }
</style>
